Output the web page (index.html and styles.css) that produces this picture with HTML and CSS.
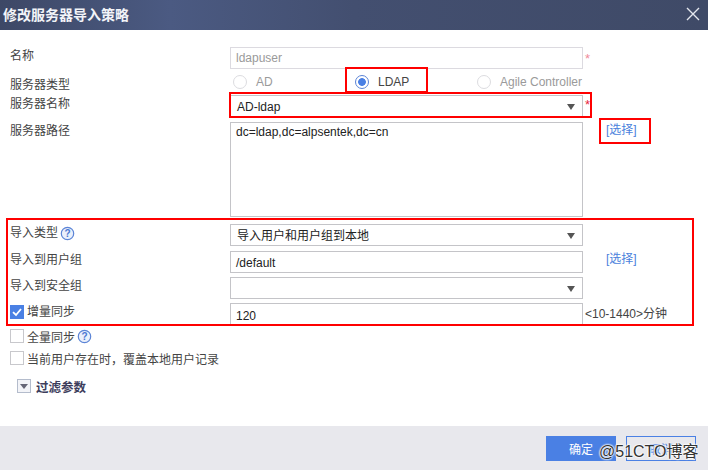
FILE: index.html
```html
<!DOCTYPE html>
<html lang="zh-CN">
<head>
<meta charset="utf-8">
<title>修改服务器导入策略</title>
<link rel="stylesheet" href="styles.css">
</head>
<body>
<div class="dialog">
  <header class="head">
    <h1 class="title">修改服务器导入策略</h1>
    <svg class="close" width="14" height="14" viewBox="0 0 14 14"><path d="M1 1 13 13M13 1 1 13" stroke="#e4e7ee" stroke-width="1.4" fill="none"/></svg>
  </header>
  <main class="form">
    <div class="row row-name">
      <label class="label">名称</label>
      <div class="field field-disabled">ldapuser</div>
      <span class="star star-light">*</span>
    </div>
    <div class="row row-radio">
      <label class="label label-radio">服务器类型</label>
      <div class="radios">
        <span class="radio-item item-ad"><i class="radio"></i><span class="muted">AD</span></span>
        <span class="radio-item item-ldap"><i class="radio radio-on"></i><span class="dark">LDAP</span></span>
        <span class="radio-item"><i class="radio"></i><span class="muted">Agile Controller</span></span>
      </div>
    </div>
    <div class="row row-server">
      <label class="label">服务器名称</label>
      <div class="field field-select">AD-ldap<i class="caret"></i></div>
      <span class="star">*</span>
    </div>
    <div class="row row-path">
      <label class="label">服务器路径</label>
      <div class="field field-area">dc=ldap,dc=alpsentek,dc=cn</div>
      <a class="pick pick-top">[选择]</a>
    </div>
    <div class="row row-type">
      <label class="label">导入类型<svg class="help" width="15" height="15" viewBox="0 0 15 15"><circle cx="7.5" cy="7.5" r="6.2" fill="#eaf0fb" stroke="#5b84d6" stroke-width="1.2"/><text x="7.5" y="11" text-anchor="middle" class="help-mark">?</text></svg></label>
      <div class="field field-select">导入用户和用户组到本地<i class="caret"></i></div>
    </div>
    <div class="row row-group">
      <label class="label">导入到用户组</label>
      <div class="field">/default</div>
      <a class="pick">[选择]</a>
    </div>
    <div class="row row-secure">
      <label class="label">导入到安全组</label>
      <div class="field field-select"><i class="caret"></i></div>
    </div>
    <div class="row row-sync">
      <label class="label label-check"><i class="check check-on"><svg width="14" height="14" viewBox="0 0 14 14"><path d="M3 7.2 6 10 11 4" stroke="#fff" stroke-width="1.8" fill="none"/></svg></i>增量同步</label>
      <div class="field field-sync">120</div>
      <span class="hint">&lt;10-1440&gt;分钟</span>
    </div>
    <div class="line line-full">
      <i class="check"></i>全量同步<svg class="help" width="15" height="15" viewBox="0 0 15 15"><circle cx="7.5" cy="7.5" r="6.2" fill="#eaf0fb" stroke="#5b84d6" stroke-width="1.2"/><text x="7.5" y="11" text-anchor="middle" class="help-mark">?</text></svg>
    </div>
    <div class="line line-over">
      <i class="check"></i>当前用户存在时，覆盖本地用户记录
    </div>
    <div class="line line-filter">
      <i class="fold"></i><strong class="filter-name">过滤参数</strong>
    </div>
  </main>
  <footer class="foot">
    <button class="btn btn-ok">确定</button>
    <button class="btn btn-cancel">取消</button>
  </footer>
  <span class="mark mark-ldap"></span>
  <span class="mark mark-server"></span>
  <span class="mark mark-pick"></span>
  <span class="mark mark-import"></span>
  <span class="watermark">@51CTO博客</span>
</div>
</body>
</html>
```
FILE: styles.css
```css
* { box-sizing: border-box; }
html, body { margin: 0; padding: 0; }
body {
  width: 708px;
  height: 470px;
  overflow: hidden;
  background: #fff;
  font-family: "Liberation Sans", "Noto Sans CJK SC", sans-serif;
  font-size: 12px;
  color: #333;
}
.dialog { position: relative; width: 708px; height: 470px; display: flex; flex-direction: column; }
.head {
  height: 30px;
  flex: none;
  display: flex;
  align-items: center;
  justify-content: space-between;
  padding: 0 8px 2px 3px;
  background: linear-gradient(90deg, #3d4866 0%, #4b5a82 24%, #434f70 50%, #3f4a67 100%);
}
.title { margin: 0; font-size: 14px; font-weight: 700; color: #f2f4f8; }
.form { flex: 1; padding: 17px 0 0 10px; }
.row { display: flex; align-items: flex-start; }
.label { width: 220px; flex: none; padding-top: 1px; line-height: 16px; color: #444; display: flex; align-items: center; }
.field {
  position: relative;
  width: 353px;
  height: 22px;
  flex: none;
  border: 1px solid #c4c4c8;
  padding: 1px 5px 0;
  line-height: 21px;
  font-size: 12px;
  color: #222;
  background: #fff;
}
.field-disabled { border-color: #dcdae0; color: #9a9a9a; padding-top: 0; }
.field-select { padding-left: 6px; }
.field-area { height: 95px; line-height: 18px; padding-top: 0; }
.field-sync { padding-top: 2px; }
.caret {
  position: absolute;
  right: 7px;
  top: 8px;
  border: 4px solid transparent;
  border-top: 6px solid #555;
  border-bottom: 0;
}
.star { margin: 5px 0 0 2px; color: #e8263c; font-size: 13px; line-height: 14px; }
.star-light { color: #f08a9a; }
.row-radio { margin-top: 2px; height: 22px; }
.label-radio { padding-top: 6px; height: 22px; }
.row-server { margin-top: 2px; }
.row-server .star { margin-top: 3px; }
.row-path { margin-top: 5px; }
.row-type { margin-top: 7px; }
.row-group { margin-top: 5px; }
.row-secure { margin-top: 4px; }
.row-sync { margin-top: 4px; }
.radios { display: flex; align-items: center; height: 22px; }
.radio-item { display: flex; align-items: center; gap: 9px; font-size: 12px; }
.item-ad { width: 125px; padding-left: 3px; }
.item-ldap { width: 122px; }
.radio { width: 14px; height: 14px; border-radius: 50%; border: 1px solid #dcdce0; background: #fff; display: block; }
.radio-on { border-color: #5b84d6; background: radial-gradient(circle, #4a80e4 0 3.5px, #fff 4.2px); }
.muted { color: #9a9a9a; }
.dark { color: #444; }
.pick { margin: 0 0 0 23px; color: #4a7fdc; line-height: 16px; }
.pick-top { margin-top: 0; }
.hint { margin: 3px 0 0 2px; color: #444; line-height: 16px; }
.help { margin-left: 2px; }
.help-mark { font-size: 10px; font-weight: 700; fill: #4a78d2; font-family: "Liberation Sans", sans-serif; }
.label-check { gap: 3px; }
.check { width: 14px; height: 14px; flex: none; border: 1px solid #c8c8cc; background: #fff; display: block; }
.check-on { background: #4a80e4; border-color: #4a80e4; }
.check-on svg { display: block; margin: -1px; }
.line { display: flex; align-items: center; color: #444; height: 14px; }
.line .check { margin-right: 3px; }
.line-full { margin-top: 4px; }
.line-over { margin-top: 8px; }
.line-filter { margin-top: 14px; padding-left: 7px; }
.fold { position: relative; width: 14px; height: 14px; border: 1px solid #b4bccc; background: #f3f4f8; display: block; margin-right: 5px; }
.fold::after {
  content: "";
  position: absolute;
  left: 2px;
  top: 4px;
  border: 4px solid transparent;
  border-top: 5px solid #667;
  border-bottom: 0;
}
.filter-name { color: #3d3d5c; font-size: 12.5px; }
.foot {
  height: 44px;
  flex: none;
  background: #e8e8ed;
  display: flex;
  justify-content: flex-end;
  gap: 10px;
  padding: 10px 12px 0 0;
}
.btn {
  width: 70px;
  height: 25px;
  font-family: inherit;
  font-size: 12px;
  padding: 0;
  border: 1px solid #4a80e4;
}
.btn-ok { background: #4a80e4; color: #fff; }
.btn-cancel { background: transparent; color: #4a80e4; }
.mark { position: absolute; border: 2px solid #f00; }
.mark-ldap { left: 345px; top: 67px; width: 83px; height: 26px; }
.mark-server { left: 229px; top: 92px; width: 363px; height: 26px; }
.mark-pick { left: 599px; top: 118px; width: 52px; height: 26px; }
.mark-import { left: 6px; top: 218px; width: 688px; height: 108px; }
.watermark {
  position: absolute;
  left: 599px;
  top: 442px;
  font-size: 16px;
  line-height: 20px;
  color: #333;
  text-shadow: 0 0 2px #fff, 0 0 2px #fff, 0 0 2px #fff, 0 0 2px #fff;
}
```
